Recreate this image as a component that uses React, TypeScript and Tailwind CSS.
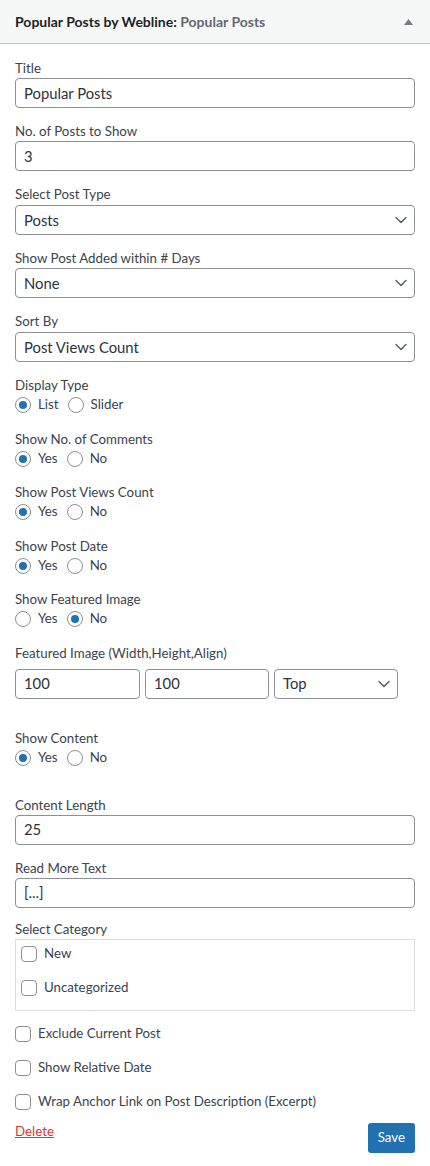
import { ChevronDown } from 'lucide-react';

const font = "font-['Lato','Noto_Sans',sans-serif]";

function Label({ children }: { children: React.ReactNode }) {
  return <div className="h-[18px] leading-[18px] text-[13.3px] text-[#3c434a]">{children}</div>;
}

function TextField({ value, className = '' }: { value: string; className?: string }) {
  return (
    <div
      className={`h-[30px] flex items-center px-[8px] rounded-[4px] border border-[#8c8f94] bg-white text-[14.8px] text-[#2c3338] ${className}`}
    >
      {value}
    </div>
  );
}

function SelectField({ value, className = '' }: { value: string; className?: string }) {
  return (
    <div
      className={`h-[30px] flex items-center justify-between pl-[8px] pr-[3px] rounded-[4px] border border-[#8c8f94] bg-white text-[14.8px] text-[#2c3338] ${className}`}
    >
      <span>{value}</span>
      <ChevronDown size={20} strokeWidth={1.6} className="text-[#50575e]" />
    </div>
  );
}

function Radio({ checked }: { checked?: boolean }) {
  return (
    <span className="w-[16px] h-[16px] rounded-full border border-[#8c8f94] bg-white flex items-center justify-center shrink-0">
      {checked && <span className="w-[8px] h-[8px] rounded-full bg-[#2271b1]" />}
    </span>
  );
}

function Checkbox() {
  return <span className="w-[16px] h-[16px] rounded-[4px] border border-[#8c8f94] bg-white shrink-0" />;
}

function RadioRow({ options, selected }: { options: string[]; selected: number }) {
  return (
    <div className="h-[22px] flex items-center text-[13.3px] text-[#3c434a]">
      {options.map((o, i) => (
        <span key={o} className="flex items-center mr-[9px]">
          <Radio checked={i === selected} />
          <span className="ml-[7px]">{o}</span>
        </span>
      ))}
    </div>
  );
}

function RadioGroup({ label, options, selected }: { label: string; options: string[]; selected: number }) {
  return (
    <div className="mb-[13.5px]">
      <Label>{label}</Label>
      <RadioRow options={options} selected={selected} />
    </div>
  );
}

export default function App() {
  return (
    <div className={`w-[430px] min-h-[1166px] bg-white ${font}`}>
      <div className="h-[44px] flex items-center justify-between pl-[15px] pr-[17px] bg-[#f6f7f7] border-b border-[#c3c4c7]">
        <h3 className="text-[14px] font-bold text-[#1d2327]">
          Popular Posts by Webline: <span className="text-[#646970]">Popular Posts</span>
        </h3>
        <svg width="9" height="6" viewBox="0 0 9 6">
          <polygon points="4.5,0 9,6 0,6" fill="#787c82" />
        </svg>
      </div>

      <div className="px-[15px] pt-[15px]">
        <div className="mb-[14px]">
          <Label>Title</Label>
          <TextField value="Popular Posts" className="mt-px" />
        </div>
        <div className="mb-[14px]">
          <Label>No. of Posts to Show</Label>
          <TextField value="3" className="mt-px" />
        </div>
        <div className="mb-[14px]">
          <Label>Select Post Type</Label>
          <SelectField value="Posts" className="mt-[2px]" />
        </div>
        <div className="mb-[14px]">
          <Label>Show Post Added within # Days</Label>
          <SelectField value="None" className="mt-[1px]" />
        </div>
        <div className="mb-[14px]">
          <Label>Sort By</Label>
          <SelectField value="Post Views Count" className="mt-[2px]" />
        </div>

        <RadioGroup label="Display Type" options={['List', 'Slider']} selected={0} />
        <RadioGroup label="Show No. of Comments" options={['Yes', 'No']} selected={0} />
        <RadioGroup label="Show Post Views Count" options={['Yes', 'No']} selected={0} />
        <RadioGroup label="Show Post Date" options={['Yes', 'No']} selected={0} />
        <RadioGroup label="Show Featured Image" options={['Yes', 'No']} selected={1} />

        <div className="mb-[30px]">
          <Label>Featured Image (Width,Height,Align)</Label>
          <div className="mt-[7px] flex gap-[5px]">
            <TextField value="100" className="w-[125px]" />
            <TextField value="100" className="w-[124px]" />
            <SelectField value="Top" className="w-[124px]" />
          </div>
        </div>

        <div className="mb-[27px]">
          <Label>Show Content</Label>
          <RadioRow options={['Yes', 'No']} selected={0} />
        </div>

        <div className="mb-[14px]">
          <Label>Content Length</Label>
          <TextField value="25" className="mt-px" />
        </div>
        <div className="mb-[12px]">
          <Label>Read More Text</Label>
          <TextField value="[...]" className="mt-px" />
        </div>

        <div className="mb-[14px]">
          <Label>Select Category</Label>
          <div className="mt-px h-[72px] border border-[#dcdcde] pl-[5px] pt-[5px] text-[13.3px] text-[#3c434a]">
            <div className="h-[18px] flex items-center gap-[7px]">
              <Checkbox />
              <span>New</span>
            </div>
            <div className="mt-[16px] h-[18px] flex items-center gap-[7px]">
              <Checkbox />
              <span>Uncategorized</span>
            </div>
          </div>
        </div>

        <div className="flex flex-col gap-[16px] text-[13.3px] text-[#3c434a]">
          {['Exclude Current Post', 'Show Relative Date', 'Wrap Anchor Link on Post Description (Excerpt)'].map((t) => (
            <div key={t} className="h-[18px] flex items-center gap-[7px]">
              <Checkbox />
              <span>{t}</span>
            </div>
          ))}
        </div>

        <div className="mt-[11px] flex justify-between items-start">
          <a href="#" className="leading-[18px] text-[13.3px] text-[#d63638] underline">
            Delete
          </a>
          <button className="mt-px h-[30px] px-[10px] rounded-[3px] bg-[#2271b1] text-white text-[13.3px]">Save</button>
        </div>
      </div>
    </div>
  );
}
